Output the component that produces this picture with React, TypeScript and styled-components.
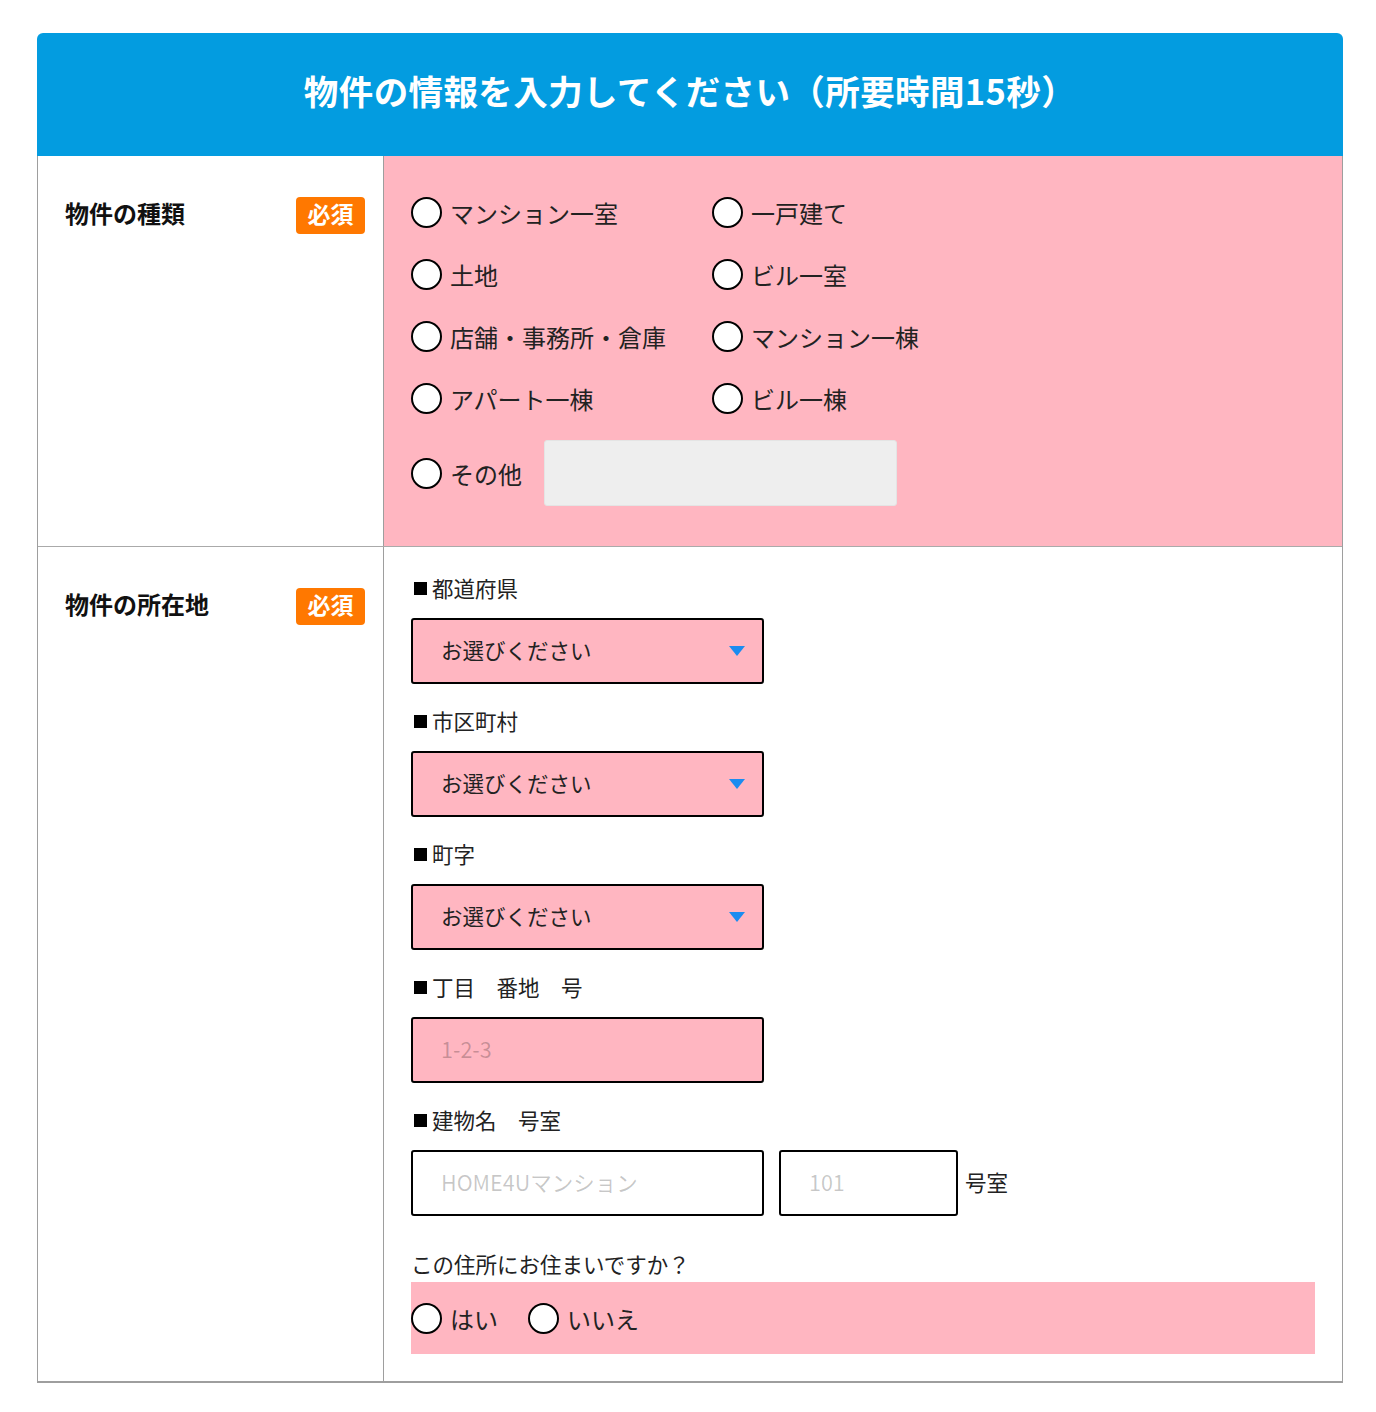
import React from "react";
import styled, { createGlobalStyle } from "styled-components";

// ===================== GLOBAL =====================
const GlobalStyle = createGlobalStyle`
  * { box-sizing: border-box; }
  body {
    margin: 0;
    background: #fff;
    font-family: "Noto Sans CJK JP", "Noto Sans", sans-serif;
    color: #222;
  }
`;

const PINK = "#ffb6c1";
const LINE = "#9e9e9e";

// ===================== STYLED COMPONENTS =====================
const Page = styled.div`
  padding: 33px 33px 30px 37px;
`;

const Form = styled.section`
  width: 1306px;
`;

const Header = styled.h1`
  margin: 0;
  height: 123px;
  padding-bottom: 9px;
  display: flex;
  align-items: center;
  justify-content: center;
  background: #039ce0;
  border-radius: 6px 6px 0 0;
  color: #fff;
  font-size: 34.5px;
  font-weight: 700;
  letter-spacing: 0.4px;
`;

const Table = styled.div`
  border-left: 1px solid ${LINE};
  border-right: 1px solid ${LINE};
  border-bottom: 2px solid ${LINE};
`;

const Row = styled.div<{ $divider?: boolean }>`
  display: grid;
  grid-template-columns: 346px 1fr;
  border-top: ${({ $divider }) => ($divider ? `1px solid #aaa` : "none")};
`;

const Head = styled.div`
  border-right: 1px solid ${LINE};
  padding: 41px 18px 0 27px;
  display: flex;
  justify-content: space-between;
  align-items: flex-start;
`;

const HeadLabel = styled.span`
  font-size: 24px;
  font-weight: 700;
  line-height: 31px;
  color: #111;
`;

const Badge = styled.span`
  width: 69px;
  height: 37px;
  padding-bottom: 5px;
  display: flex;
  align-items: center;
  justify-content: center;
  background: #ff7800;
  border-radius: 4px;
  color: #fff;
  font-size: 23px;
  font-weight: 700;
`;

const Body = styled.div<{ $pink?: boolean }>`
  background: ${({ $pink }) => ($pink ? PINK : "#fff")};
  padding: ${({ $pink }) => ($pink ? "41px 27px 40px 27px" : "26px 27px 27px 27px")};
`;

const RadioGrid = styled.div`
  display: grid;
  grid-template-columns: 301px 301px;
  row-gap: 32px;
`;

const RadioItem = styled.label`
  display: inline-flex;
  align-items: center;
  gap: 8px;
  height: 30px;
  font-size: 24px;
  color: #222;
  cursor: pointer;
`;

const Radio = styled.input.attrs({ type: "radio" })`
  appearance: none;
  margin: 0;
  width: 31px;
  height: 31px;
  border: 2px solid #000;
  border-radius: 50%;
  background: #fff;
  flex: none;
`;

const OtherRow = styled.div`
  display: flex;
  align-items: center;
  margin-top: 27px;
`;

const OtherInput = styled.input`
  margin-left: 22px;
  width: 353px;
  height: 66px;
  border: 1px solid #e4e4e4;
  border-radius: 3px;
  background: #eee;
  outline: none;
`;

const Field = styled.div<{ $gap?: number }>`
  & + & {
    margin-top: ${({ $gap = 20 }) => $gap}px;
  }
`;

const FieldLabel = styled.div`
  font-size: 21.5px;
  line-height: 30px;
  margin-bottom: 15px;
  color: #222;
  display: flex;
  align-items: center;
  white-space: pre;

  &::before {
    content: "";
    width: 13px;
    height: 13px;
    background: #000;
    margin: 0 5px 0 3px;
  }
`;

const SelectWrap = styled.div`
  position: relative;
  width: 353px;

  &::after {
    content: "";
    position: absolute;
    right: 19px;
    top: 28px;
    border-left: 8px solid transparent;
    border-right: 8px solid transparent;
    border-top: 10px solid #1b8cf0;
    pointer-events: none;
  }
`;

const Select = styled.select`
  appearance: none;
  width: 100%;
  height: 66px;
  border: 2px solid #000;
  border-radius: 3px;
  background: ${PINK};
  padding: 0 0 3px 28px;
  font-family: inherit;
  font-size: 21.5px;
  color: #222;
  outline: none;
`;

const TextInput = styled.input<{ $w: number; $pink?: boolean }>`
  width: ${({ $w }) => $w}px;
  height: 66px;
  border: 2px solid #000;
  border-radius: 3px;
  background: ${({ $pink }) => ($pink ? PINK : "#fff")};
  padding: 0 0 3px 28px;
  font-family: inherit;
  font-size: 21.5px;
  color: #222;
  outline: none;

  &::placeholder {
    color: rgba(0, 0, 0, 0.22);
  }
`;

const InlineRow = styled.div`
  display: flex;
  align-items: center;
  gap: 15px;
`;

const Unit = styled.span`
  font-size: 21.5px;
  margin-left: -8px;
  padding-bottom: 4px;
`;

const Question = styled.div`
  margin-top: 33px;
  font-size: 21.5px;
  line-height: 30px;
  color: #222;
`;

const AnswerBox = styled.div`
  margin-top: 3px;
  height: 72px;
  background: ${PINK};
  display: flex;
  align-items: center;
  gap: 30px;
`;

// ===================== DATA =====================
const kinds = [
  "マンション一室",
  "一戸建て",
  "土地",
  "ビル一室",
  "店舗・事務所・倉庫",
  "マンション一棟",
  "アパート一棟",
  "ビル一棟",
];

const SelectField = ({ label }: { label: string }) => (
  <Field>
    <FieldLabel>{label}</FieldLabel>
    <SelectWrap>
      <Select defaultValue="">
        <option value="">お選びください</option>
      </Select>
    </SelectWrap>
  </Field>
);

// ===================== COMPONENT =====================
const App: React.FC = () => {
  return (
    <>
      <GlobalStyle />
      <Page>
        <Form>
          <Header>物件の情報を入力してください（所要時間15秒）</Header>
          <Table>
            <Row>
              <Head>
                <HeadLabel>物件の種類</HeadLabel>
                <Badge>必須</Badge>
              </Head>
              <Body $pink>
                <RadioGrid>
                  {kinds.map((k) => (
                    <RadioItem key={k}>
                      <Radio name="kind" />
                      {k}
                    </RadioItem>
                  ))}
                </RadioGrid>
                <OtherRow>
                  <RadioItem>
                    <Radio name="kind" />
                    その他
                  </RadioItem>
                  <OtherInput type="text" />
                </OtherRow>
              </Body>
            </Row>

            <Row $divider>
              <Head>
                <HeadLabel>物件の所在地</HeadLabel>
                <Badge>必須</Badge>
              </Head>
              <Body>
                <SelectField label="都道府県" />
                <SelectField label="市区町村" />
                <SelectField label="町字" />
                <Field $gap={24}>
                  <FieldLabel>丁目　番地　号</FieldLabel>
                  <TextInput $w={353} $pink placeholder="1-2-3" />
                </Field>
                <Field $gap={22}>
                  <FieldLabel>建物名　号室</FieldLabel>
                  <InlineRow>
                    <TextInput $w={353} placeholder="HOME4Uマンション" />
                    <TextInput $w={179} placeholder="101" />
                    <Unit>号室</Unit>
                  </InlineRow>
                </Field>
                <Question>この住所にお住まいですか？</Question>
                <AnswerBox>
                  <RadioItem>
                    <Radio name="live" />
                    はい
                  </RadioItem>
                  <RadioItem>
                    <Radio name="live" />
                    いいえ
                  </RadioItem>
                </AnswerBox>
              </Body>
            </Row>
          </Table>
        </Form>
      </Page>
    </>
  );
};

export default App;
